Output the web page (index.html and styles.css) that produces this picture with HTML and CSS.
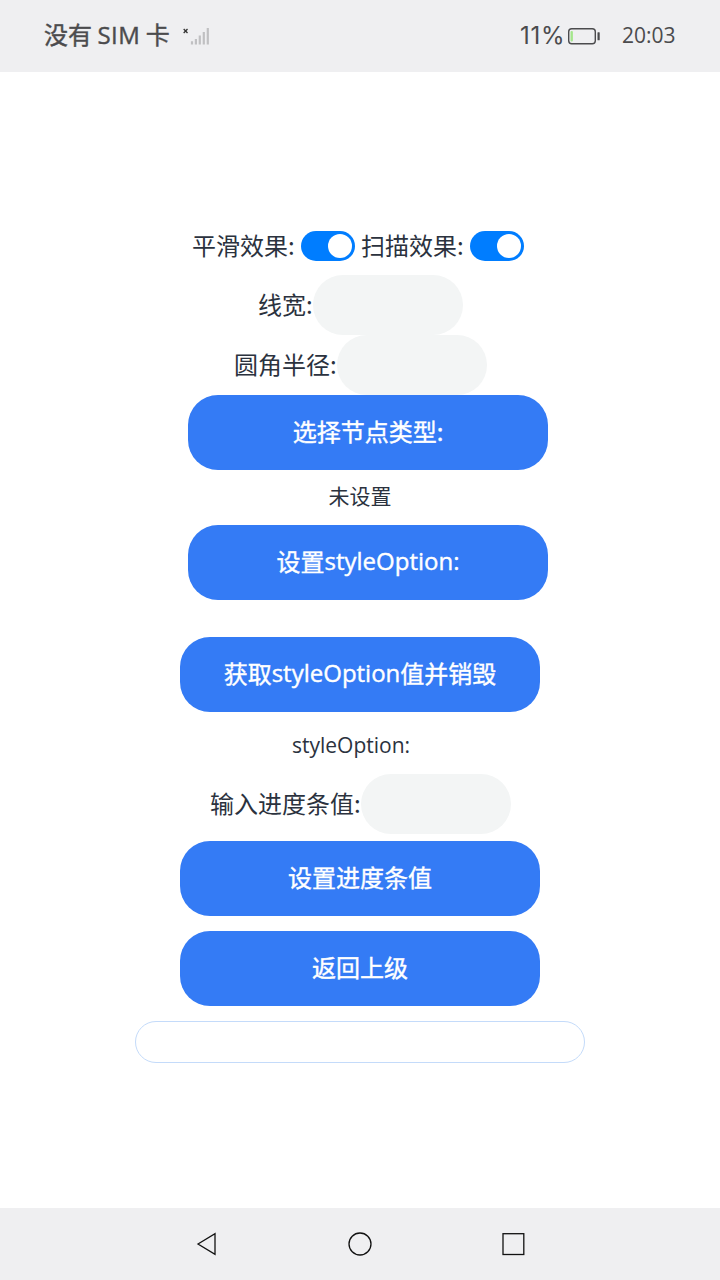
FILE: index.html
```
<!DOCTYPE html>
<html lang="zh-CN">
<head>
<meta charset="utf-8">
<title>进度条</title>
<link rel="stylesheet" href="styles.css">
</head>
<body>
<header class="status">
  <span class="carrier">没有 <span class="sim">SIM</span> 卡</span>
  <svg class="signal" width="28" height="20" viewBox="0 0 28 20">
    <path d="M1.7 3l3.8 4M5.5 3l-3.8 4" stroke="#333" stroke-width="1.3"/>
    <path d="M10 15.3v3.2M13.9 13v5.5M17.8 9.5v9M21.8 6v12.5M25.8 2v16.5" stroke="#c0c0c2" stroke-width="2.2"/>
  </svg>
  <span class="percent">11%</span>
  <svg class="battery" width="34" height="18" viewBox="0 0 34 18">
    <rect x="1.7" y="1.7" width="26.6" height="15" rx="3" fill="none" stroke="#4b4b4d" stroke-width="1.4"/>
    <rect x="3.5" y="4" width="2.4" height="10.5" rx="1" fill="#a4e68c"/>
    <rect x="30.5" y="5.2" width="2.2" height="8" rx=".5" fill="#4b4b4d"/>
  </svg>
  <span class="time">20:03</span>
</header>
<main class="content">
  <div class="switches">
    <span class="label switch-label">平滑效果:</span><span class="toggle"></span>
    <span class="label switch-label second">扫描效果:</span><span class="toggle"></span>
  </div>
  <div class="row line-width"><span class="label">线宽:</span><span class="input"></span></div>
  <div class="row radius"><span class="label">圆角半径:</span><span class="input"></span></div>
  <div class="button shifted">选择节点类型:</div>
  <div class="note unset">未设置</div>
  <div class="button shifted"><span>设置</span><span class="latin">styleOption:</span></div>
  <div class="button fetch"><span>获取</span><span class="latin">styleOption</span><span>值并销毁</span></div>
  <div class="note result"><span class="latin">styleOption:</span></div>
  <div class="row value"><span class="label">输入进度条值:</span><span class="input"></span></div>
  <div class="button apply">设置进度条值</div>
  <div class="button back">返回上级</div>
  <div class="progress"></div>
</main>
<nav class="navbar">
  <svg width="24" height="26" viewBox="0 0 24 26"><path d="M2 13L19 2.6v20.8z" class="nav-icon"/></svg>
  <svg width="26" height="26" viewBox="0 0 26 26"><circle cx="13" cy="13" r="11" class="nav-icon"/></svg>
  <svg width="26" height="26" viewBox="0 0 26 26"><rect x="3" y="2.7" width="20.8" height="20.8" class="nav-icon"/></svg>
</nav>
</body>
</html>
```
FILE: styles.css
```
* { box-sizing: border-box; }
body {
  margin: 0;
  width: 720px;
  height: 1280px;
  display: flex;
  flex-direction: column;
  background: #fff;
  color: #2b323e;
  font-family: "Noto Sans CJK SC", sans-serif;
  font-size: 24px;
  line-height: 30px;
  white-space: nowrap;
  overflow: hidden;
}
.status {
  height: 72px;
  display: flex;
  align-items: center;
  padding-left: 44px;
  background: #efeff1;
  color: #4b4b4d;
  flex: none;
}
.carrier { width: 138px; padding-bottom: 3px; -webkit-text-stroke: 0.4px; }
.sim { font-family: "Open Sans", sans-serif; letter-spacing: 0.5px; }
.signal { margin-right: 310px; }
.percent { width: 47px; padding-bottom: 1px; font: 24px/30px Inter, sans-serif; letter-spacing: 0.8px; }
.battery { margin-right: 21px; }
.time { padding-bottom: 2px; font: 21px/30px "Open Sans", sans-serif; }
.content { flex: 1; padding-top: 159px; }
.switches {
  display: flex;
  align-items: center;
  height: 30px;
  padding-left: 192px;
}
.label { padding-bottom: 3px; }
.switch-label { width: 109px; }
.second { margin-left: 6px; }
.toggle {
  width: 54px;
  height: 30px;
  padding: 3px;
  border-radius: 15px;
  background: #007dff;
  display: flex;
  justify-content: flex-end;
}
.toggle::after {
  content: "";
  width: 24px;
  height: 24px;
  border-radius: 50%;
  background: #fff;
}
.row { display: flex; align-items: center; height: 60px; }
.row .label { flex: none; }
.input {
  width: 150px;
  height: 60px;
  border-radius: 30px;
  background: #f3f5f5;
}
.line-width { margin-top: 14px; padding-left: 258px; }
.line-width .label { width: 55px; }
.radius { padding-left: 234px; }
.radius .label { width: 103px; }
.value { padding-left: 210px; }
.value .label { width: 151px; }
.button {
  width: 360px;
  height: 75px;
  margin-left: 180px;
  padding-bottom: 3px;
  border-radius: 30px;
  background: #347bf5;
  color: #fff;
  -webkit-text-stroke: 0.4px;
  display: flex;
  align-items: center;
  justify-content: center;
}
.shifted { margin-left: 188px; }
.fetch { margin-top: 37px; }
.apply { margin-top: 7px; }
.back { margin-top: 15px; }
.latin { font-family: "Open Sans", sans-serif; }
.note { font-size: 21px; text-align: center; }
.unset { height: 55px; padding-top: 10px; }
.result { height: 62px; padding: 17px 18px 0 0; }
.progress {
  width: 450px;
  height: 42px;
  margin: 15px 0 0 135px;
  border: 1px solid #c4dbfa;
  border-radius: 21px;
}
.navbar {
  height: 72px;
  flex: none;
  display: flex;
  justify-content: space-between;
  align-items: center;
  padding: 0 194px 0 196px;
  background: #efeff1;
}
.nav-icon { fill: none; stroke: #111; stroke-width: 1.3; }
```
